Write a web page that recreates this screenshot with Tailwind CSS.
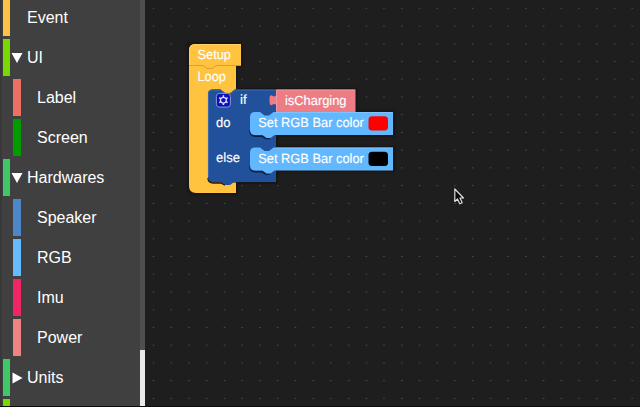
<!DOCTYPE html>
<html lang="en">
<head>
<meta charset="utf-8">
<title>Blocks</title>
<script src="https://cdn.jsdelivr.net/npm/@tailwindcss/browser@4"></script>
</head>
<body class="w-[640px] h-[407px] overflow-hidden bg-[#1e1e1e] font-['Liberation_Sans',Arial,sans-serif]">
<div class="flex w-[640px] h-[407px] overflow-hidden border-b border-[#0c0c0c]">
  <aside class="flex w-[145px] shrink-0 h-full bg-[#404040] border-l-2 border-[#383838] text-[16px] text-white">
    <nav class="flex-1 h-full overflow-hidden pl-px">
      <div class="-mt-px flex flex-col gap-[3px]">
        <div class="flex h-[37px] items-center shrink-0"><span class="w-[7px] h-full bg-[#ffc045]"></span><span class="ml-[17px]">Event</span></div>
        <div class="flex h-[37px] items-center shrink-0"><span class="w-[7px] h-full bg-[#78d900]"></span><svg class="ml-[1px] w-[12px] h-[12px]" viewBox="0 0 12 12"><path d="M.5 1H11.5L6 11Z" fill="#fff"/></svg><span class="ml-[4px]">UI</span></div>
        <div class="flex h-[37px] items-center shrink-0 pl-[10px]"><span class="w-[8px] h-full bg-[#ee7062]"></span><span class="ml-[16px]">Label</span></div>
        <div class="flex h-[37px] items-center shrink-0 pl-[10px]"><span class="w-[8px] h-full bg-[#009c00]"></span><span class="ml-[16px]">Screen</span></div>
        <div class="flex h-[37px] items-center shrink-0"><span class="w-[7px] h-full bg-[#40c868]"></span><svg class="ml-[1px] w-[12px] h-[12px]" viewBox="0 0 12 12"><path d="M.5 1H11.5L6 11Z" fill="#fff"/></svg><span class="ml-[4px]">Hardwares</span></div>
        <div class="flex h-[37px] items-center shrink-0 pl-[10px]"><span class="w-[8px] h-full bg-[#4e87c8]"></span><span class="ml-[16px]">Speaker</span></div>
        <div class="flex h-[37px] items-center shrink-0 pl-[10px]"><span class="w-[8px] h-full bg-[#68baff]"></span><span class="ml-[16px]">RGB</span></div>
        <div class="flex h-[37px] items-center shrink-0 pl-[10px]"><span class="w-[8px] h-full bg-[#ef2663]"></span><span class="ml-[16px]">Imu</span></div>
        <div class="flex h-[37px] items-center shrink-0 pl-[10px]"><span class="w-[8px] h-full bg-[#f08484]"></span><span class="ml-[16px]">Power</span></div>
        <div class="flex h-[37px] items-center shrink-0"><span class="w-[7px] h-full bg-[#40c868]"></span><svg class="ml-[1px] w-[12px] h-[12px]" viewBox="0 0 12 12"><path d="M1.5 .5L11.5 6L1.5 11.5Z" fill="#fff"/></svg><span class="ml-[4px]">Units</span></div>
        <div class="flex h-[37px] items-center shrink-0"><span class="w-[7px] h-full bg-[#78d900]"></span></div>
      </div>
    </nav>
    <div class="flex w-[5px] h-full flex-col justify-end bg-[#4f4f4f]"><span class="h-[56px] bg-[#e9e9e9]"></span></div>
  </aside>
  <main class="flex-1 h-full">
    <svg class="block w-[495px] h-[406px]" viewBox="145 0 495 406">
      <defs>
        <pattern id="grid" x="152.8" y="7.8" width="17.73" height="17.73" patternUnits="userSpaceOnUse"><rect width="1.4" height="1" fill="#505050"/></pattern>
        <filter id="soft" x="-10%" y="-10%" width="120%" height="120%"><feGaussianBlur stdDeviation="1.2"/></filter>
        <path id="setcolor" d="M255 0H260L264.500 3.500H269L273.500 0H393V23H274.500L270.500 26H266.500L262.500 23H255Q250 23 250 18V5Q250 0 255 0Z"/>
      </defs>
      <rect x="145" width="495" height="406" fill="#1e1e1e"/>
      <rect x="145" width="495" height="406" fill="url(#grid)"/>
      <path d="M187 42H243V67H238V88H358V110H395V137H278V146H395V172H278V184H238V195H192L187 190Z" fill="#141414" filter="url(#soft)"/>

      <!-- Loop and Setup -->
      <path d="M189 65H236V89.500H235L230.500 93H225L220.500 89.500H213Q208 89.500 208 94V177.500Q208 182.500 213 182.500H236V193H196Q189 193 189 186Z" fill="#ffc340"/>
      <path d="M189 65.500V50Q189 44 195 44H241V65.500H216L212 68.500H207L203 65.500Z" fill="#ffc340"/>
      <path d="M189 65.500H203L207 68.500H212L216 65.500H241" fill="none" stroke="#d39d34" stroke-width=".9"/>
      <path d="M189.500 65V50Q189.500 44.500 195 44.500H240.500" fill="none" stroke="#ffd273" stroke-width=".8"/>
      <path d="M208 178Q208.500 183 213 183H221.500L225 185" fill="none" stroke="#241d10" stroke-width="1.600"/>

      <!-- if / do / else -->
      <path d="M213 89.500H220.500L225 93H230.500L235 89.500H276V182H234L230 185H225.500L221.500 182H213Q208 182 208 177V94.500Q208 89.500 213 89.500Z" fill="#21519a"/>
      <path d="M208.400 177V94.500Q208.400 90 213 90H220.500L225 93.400H230.500L235 90H276" fill="none" stroke="#4670ae" stroke-width=".8"/>

      <path d="M250 130Q250 136.200 255.500 136.200H262L266 138.500H270" fill="none" stroke="#10203b" stroke-width="1.600"/>
      <path d="M250 165.500Q250 171.700 255.500 171.700H262L266 174H270" fill="none" stroke="#10203b" stroke-width="1.600"/>
      <path d="M276 89.500H355.500V112H276V105Q275 103 272 105Q269.500 106 269.500 101V99Q269.500 94.500 272 95.500Q275 97.500 276 95Z" fill="#ed7c84"/>
      <path d="M276.500 111V90H355" fill="none" stroke="#f39ea3" stroke-width=".8"/>
      <use href="#setcolor" y="112" fill="#62b8ff"/>
      <use href="#setcolor" y="147.500" fill="#62b8ff"/>
      <path d="M276 112.500H393M276 148H393" fill="none" stroke="#83c7ff" stroke-width=".8"/>
      <rect x="368.500" y="116.300" width="19.500" height="14.300" rx="3.500" fill="#f00"/>
      <rect x="368.500" y="151.800" width="19.500" height="14.300" rx="3.500" fill="#000"/>

      <!-- settings icon -->
      <rect x="216.400" y="93.400" width="14" height="13.700" rx="3" fill="#0b12bd" stroke="#8993db" stroke-width="1"/>
      <g transform="translate(223.400 100.200)" fill="none" stroke="#dfe4ff">
        <circle r="2.900" stroke-width="1.300"/>
        <path d="M0-3V-4.900M0 3V4.900M2.600-1.500L4.200-2.450M2.600 1.500L4.200 2.450M-2.600-1.500L-4.200-2.450M-2.600 1.500L-4.200 2.450" stroke-width="1.500"/>
      </g>

      <g fill="#fff" font-size="13.300" font-family="'Liberation Sans',Arial,sans-serif" text-rendering="geometricPrecision" stroke="#fff" stroke-width=".15">
        <text x="197.500" y="59.200" textLength="33.500" lengthAdjust="spacingAndGlyphs">Setup</text>
        <text x="197.500" y="81.400" textLength="28.500" lengthAdjust="spacingAndGlyphs">Loop</text>
        <text x="240" y="104.200">if</text>
        <text x="216" y="126.800" textLength="14.500" lengthAdjust="spacingAndGlyphs">do</text>
        <text x="216" y="162" textLength="24" lengthAdjust="spacingAndGlyphs">else</text>
        <text x="285" y="104.500" textLength="61.500" lengthAdjust="spacingAndGlyphs">isCharging</text>
        <text x="258.300" y="127.300" textLength="105.500" lengthAdjust="spacingAndGlyphs">Set RGB Bar color</text>
        <text x="258.300" y="162.900" textLength="105.500" lengthAdjust="spacingAndGlyphs">Set RGB Bar color</text>
      </g>

      <path d="M454.800 189V201.500L457.500 199L459.800 203.800L462.200 202.700L460 198H463.500Z" fill="#080808" stroke="#dedede" stroke-width="1.200" stroke-linejoin="round"/>
    </svg>
  </main>
</div>
</body>
</html>
